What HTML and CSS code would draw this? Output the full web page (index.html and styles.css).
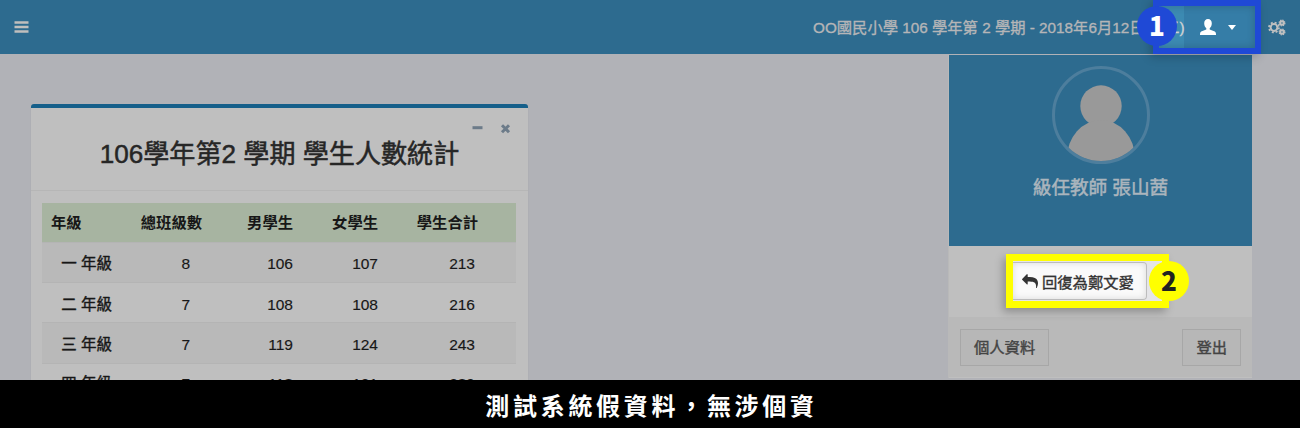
FILE: index.html
```html
<!DOCTYPE html>
<html lang="zh-Hant">
<head>
<meta charset="utf-8">
<title>學生人數統計</title>
<link rel="stylesheet" href="styles.css">
</head>
<body>
<div class="page">
  <header class="navbar">
    <svg class="menu-icon" width="15" height="13" viewBox="0 0 15 13"><path d="M.5 1.600h14M.5 6.100h14M.5 10.600h14"/></svg>
    <div class="term">OO國民小學 106 學年第 2 學期 - 2018年6月12日</div>
    <svg class="gears" width="18" height="17" viewBox="0 0 18 17">
      <circle cx="6" cy="8.5" r="3.4"/><circle class="teeth" cx="6" cy="8.5" r="5"/>
      <circle cx="14" cy="4" r="1.8"/><circle class="teeth small" cx="14" cy="4" r="2.9"/>
      <circle cx="14" cy="13" r="1.8"/><circle class="teeth small" cx="14" cy="13" r="2.9"/>
    </svg>
    <div class="callout-one">
      <div class="lit"><span class="weekday">二)</span>
        <svg class="user" width="16" height="16" viewBox="0 0 16 16"><path d="M8 0C5.700 0 4.200 1.700 4.200 4.200c0 2 .8 4 2.100 5v1.300L1.200 12.600Q0 13.200 0 15v1h16v-1q0-1.800-1.200-2.400l-5.100-2.100V9.200c1.300-1 2.100-3 2.100-5C11.800 1.700 10.300 0 8 0z"/></svg>
        <i class="caret"></i>
      </div>
      <span class="badge blue">1</span>
    </div>
  </header>
  <main class="content">
    <section class="card">
      <div class="card-head">
        <h1>106學年第2 學期 學生人數統計</h1>
        <div class="tools">
          <svg width="11" height="11" viewBox="0 0 11 11"><path d="M.5 4.700h10"/></svg>
          <svg width="11" height="11" viewBox="0 0 11 11"><path d="M2 2.200l7 7M9 2.200l-7 7"/></svg>
        </div>
      </div>
      <table class="stats">
        <thead><tr><th>年級</th><th>總班級數</th><th>男學生</th><th>女學生</th><th>學生合計</th></tr></thead>
        <tbody>
          <tr><td>一 年級</td><td>8</td><td>106</td><td>107</td><td>213</td></tr>
          <tr><td>二 年級</td><td>7</td><td>108</td><td>108</td><td>216</td></tr>
          <tr><td>三 年級</td><td>7</td><td>119</td><td>124</td><td>243</td></tr>
          <tr><td>四 年級</td><td>7</td><td>118</td><td>121</td><td>239</td></tr>
        </tbody>
      </table>
    </section>
    <aside class="profile">
      <div class="profile-head">
        <svg width="100" height="100" viewBox="0 0 100 100">
          <defs><clipPath id="disc"><circle cx="50" cy="50" r="46"/></clipPath></defs>
          <circle class="ring" cx="50" cy="50" r="47.500"/>
          <g class="person" clip-path="url(#disc)"><circle cx="50" cy="41" r="20.700"/><ellipse cx="50" cy="93" rx="34" ry="38"/></g>
        </svg>
        <p>級任教師 張山茜</p>
      </div>
      <div class="restore">
        <div class="callout-two">
          <div class="restore-button">
            <svg width="16" height="14" viewBox="0 0 1792 1408"><path d="M1792 896q0 166-127 451-3 7-10.500 24t-13.500 30-13 22q-12 17-28 17-15 0-23.500-10t-8.500-25q0-9 2.500-26.500t2.500-23.500q5-68 5-123 0-101-17.500-181t-48.500-138.500-80-101-105.500-69.500-133-42.500-154-21.500-175.500-6H640v256q0 26-19 45t-45 19-45-19L19 461Q0 442 0 416t19-45L531-141q19-19 45-19t45 19 19 45v256h224q713 0 875 403 53 134 53 333z" transform="translate(0 100)"/></svg>
            <span>回復為鄭文愛</span>
          </div>
          <span class="badge yellow">2</span>
        </div>
      </div>
      <div class="profile-foot"><span class="button">個人資料</span><span class="button">登出</span></div>
    </aside>
  </main>
  <footer class="caption">測試系統假資料，無涉個資</footer>
</div>
</body>
</html>
```
FILE: styles.css
```css
* { box-sizing: border-box; }
body { margin: 0; font-family: "Liberation Sans", "Noto Sans CJK TC", sans-serif; font-size: 15.500px; color: #171717; }
.page { width: 1300px; height: 428px; overflow: hidden; display: flex; flex-direction: column; background: #b1b2b7; }
.navbar { position: relative; z-index: 2; flex: none; height: 54px; background: #2d6b8f; display: flex; align-items: center; padding: 0 14px; }
.menu-icon { stroke: #c0bfbd; stroke-width: 2.500; }
.term { margin-left: auto; width: 340px; margin-right: 115px; color: #b5b5b7; white-space: nowrap; font-size: 15.300px; line-height: 24px; padding-top: 1px; -webkit-text-stroke: .35px; }
.gears { fill: none; stroke: #c0c0c0; stroke-width: 2; }
.teeth { stroke-width: 1.700; stroke-dasharray: 2 1.930; }
.small { stroke-width: 1.200; stroke-dasharray: 1.300 .98; }
.callout-one { position: absolute; left: 1153px; top: 0; width: 108px; height: 54px; border: 6px solid #1f49d6; box-shadow: -3px 3px 9px #00000035; }
.lit { height: 100%; display: flex; align-items: center; background: linear-gradient(90deg, #3c8ab2 25px, #357da7 25px); padding-left: 5px; box-shadow: inset 0 0 8px #00000030; }
.weekday { width: 36px; color: #d0d2d4; margin-top: -3px; -webkit-text-stroke: .3px; }
.user { fill: #fff; }
.caret { border: 4.500px solid transparent; border-top: 5px solid #fff; border-bottom: 0; margin-left: 12px; }
.badge { position: absolute; display: flex; align-items: center; justify-content: center; width: 40px; height: 40px; border-radius: 50%; font: 900 26px/38px "Noto Sans CJK TC", sans-serif; padding-bottom: 2px; }
.blue { left: -22px; top: 0; background: #1f49d6; color: #fff; }
.content { flex: 1; min-height: 0; display: flex; justify-content: space-between; padding: 0 48px 0 31px; overflow: hidden; }
.card { width: 497px; margin-top: 50px; background: #bfbfbf; border-top: 4px solid #155f8a; border-radius: 3px; height: 350px; box-shadow: 0 1px 1px #0002; }
.card-head { position: relative; height: 83px; border-bottom: 1px solid #b6b6b6; padding-top: 27px; }
h1 { margin: 0; text-align: center; font-size: 26.100px; line-height: 38px; font-weight: 400; color: #262626; -webkit-text-stroke: .5px; }
.tools { position: absolute; right: 17px; top: 15px; display: flex; gap: 17px; }
.tools svg { stroke: #6c7b89; stroke-width: 3; fill: none; }
.stats { width: 474px; margin: 12px 11px; border-collapse: collapse; table-layout: fixed; }
.stats th { height: 39px; padding: 0; background: #a7b4a1; font-weight: 700; line-height: 23px; font-size: 15.300px; text-align: right; }
.stats td { height: 40.400px; padding: 4px 0 0; border-top: 1px solid #b4b4b4; text-align: right; line-height: 24px; -webkit-text-stroke: .15px; }
.stats td:first-child { -webkit-text-stroke: .4px; }
.stats tbody tr:nth-child(odd) { background: #b9b9b9; }
.stats tbody tr:last-child td { padding-top: 1px; }
.stats th:first-child { width: 70px; text-align: left; padding-left: 9px; }
.stats th:nth-child(2) { width: 90px; }
.stats th:nth-child(3) { width: 91px; }
.stats th:nth-child(4) { width: 85px; }
.stats th:nth-child(5) { padding-right: 38px; }
.stats td:nth-child(2) { padding-right: 12px; }
.stats td:nth-child(5) { padding-right: 41px; }
.profile { width: 304px; height: 323px; margin-top: 1px; background: #bfbfbf; border-left: 1px solid #b9b9b9; }
.profile-head { height: 191px; background: #2d6b8f; text-align: center; padding-top: 10px; }
.profile-head svg { display: block; margin: 0 auto; }
.ring { fill: none; stroke: #4d7e9d; stroke-width: 3; }
.person { fill: #999; }
.profile p { margin: 8px 0; font-size: 18.600px; line-height: 30px; color: #abb5bd; -webkit-text-stroke: .5px; }
.restore { height: 71px; padding: 8px 0 0 57px; }
.callout-two { position: relative; width: 163px; height: 54px; border: 7px solid #ff0; box-shadow: -3px 4px 8px #00000040; background: #e5e5e8; }
.restore-button { height: 38px; width: 134px; margin-top: 1px; border: 1px solid #bcbcbc; border-left: 0; border-radius: 0 4px 4px 0; background: #fafafa; box-shadow: inset 0 0 7px #0002; display: flex; align-items: center; padding-left: 9px; gap: 4px; white-space: nowrap; font-size: 15.300px; color: #333; -webkit-text-stroke: .35px; }
.restore-button svg { flex: none; fill: #333; }
.yellow { left: 136px; top: 0; background: #ff0; color: #222; }
.profile-foot { height: 60px; background: #b9b9b9; padding: 12px 11px 12px 11px; display: flex; justify-content: space-between; }
.button { height: 37px; border: 1px solid #a7a7a7; background: #b7b7b7; padding: 0 13px; line-height: 36px; font-size: 15.300px; color: #444; -webkit-text-stroke: .4px; }
.caption { flex: none; height: 48px; background: #000; color: #fff; text-align: center; font: 700 24px/50px "Noto Sans CJK TC", sans-serif; letter-spacing: 3.700px; padding-left: 3px; }
```
